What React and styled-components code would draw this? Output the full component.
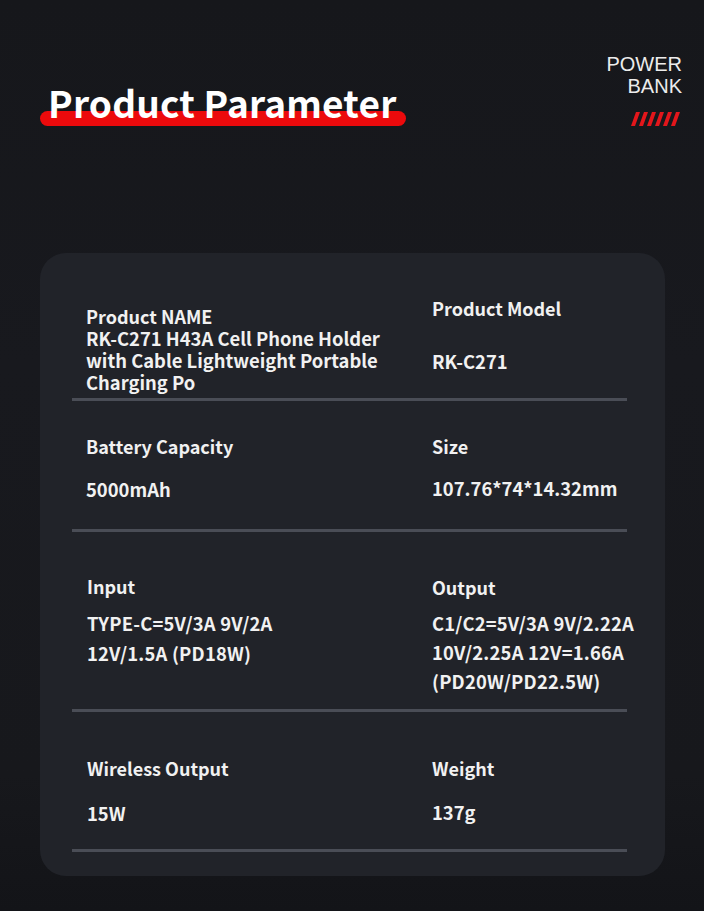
import React from "react";
import styled, { createGlobalStyle } from "styled-components";

const GlobalStyle = createGlobalStyle`
  html, body {
    margin: 0;
    padding: 0;
    background: #16171b;
  }
  * {
    box-sizing: border-box;
  }
`;

const Page = styled.div`
  width: 704px;
  height: 911px;
  overflow: hidden;
  background: linear-gradient(180deg, #16171b 0%, #18191e 40%, #17181c 85%, #131418 100%);
  font-family: "Noto Sans CJK SC", "Noto Sans", sans-serif;
  color: #f1f1f1;
`;

const Header = styled.header`
  height: 253px;
  display: flex;
  justify-content: space-between;
  align-items: flex-start;
`;

const TitleWrap = styled.div`
  position: relative;
  margin: 80px 0 0 40px;
  padding: 0 10px 0 8px;

  &::before {
    content: "";
    position: absolute;
    left: 0;
    right: 0;
    top: 31px;
    height: 15px;
    border-radius: 8px;
    background: #ec0a0c;
  }
`;

const Title = styled.h1`
  position: relative;
  margin: 0;
  font-size: 37px;
  line-height: 44px;
  font-weight: 700;
  color: #ffffff;
  letter-spacing: 0.2px;
`;

const Brand = styled.div`
  margin: 53px 22px 0 0;
  display: flex;
  flex-direction: column;
  align-items: flex-end;
`;

const BrandText = styled.div`
  font-family: "Liberation Sans", Arial, sans-serif;
  font-size: 20px;
  line-height: 22px;
  color: #ececec;
  text-align: right;
`;

const Stripes = styled.svg`
  display: block;
  margin-top: 15px;
  margin-right: 1px;
`;

const Card = styled.section`
  margin-left: 40px;
  width: 625px;
  height: 623px;
  border-radius: 26px;
  background: #212329;
  padding: 0 38px 0 32px;
`;

const Row = styled.div`
  display: grid;
  grid-template-columns: 360px 1fr;
  height: ${(p) => p.$h}px;
  border-bottom: 3px solid #4a4d56;
`;

const Field = styled.div`
  padding: ${(p) => p.$pad}px 0 0 ${(p) => (p.$right ? 0 : p.$indent || 14)}px;
  display: flex;
  flex-direction: column;
  gap: ${(p) => p.$gap}px;
`;

const Label = styled.div`
  font-size: 18px;
  line-height: 22px;
  font-weight: 700;
  white-space: nowrap;
`;

const Value = styled.div`
  font-size: 18.4px;
  line-height: ${(p) => p.$lh || 22}px;
  font-weight: 700;
  white-space: pre;
  letter-spacing: ${(p) => (p.$wide ? "0.2px" : "0")};
`;

function StripeIcon() {
  const bars = [0, 1, 2, 3, 4, 5];
  return (
    <Stripes width="50" height="14" viewBox="0 0 50 14">
      {bars.map((i) => (
        <polygon
          key={i}
          points={`${i * 8 + 5},0 ${i * 8 + 9},0 ${i * 8 + 4},14 ${i * 8},14`}
          fill="#e3161b"
        />
      ))}
    </Stripes>
  );
}

export default function App() {
  return (
    <>
      <GlobalStyle />
      <Page>
        <Header>
          <TitleWrap>
            <Title>Product Parameter</Title>
          </TitleWrap>
          <Brand>
            <BrandText>
              POWER
              <br />
              BANK
            </BrandText>
            <StripeIcon />
          </Brand>
        </Header>

        <Card>
          <Row $h={148}>
            <Field $pad={52} $gap={0}>
              <Label>Product NAME</Label>
              <Value>
                {"RK-C271 H43A Cell Phone Holder\nwith Cable Lightweight Portable\nCharging Po"}
              </Value>
            </Field>
            <Field $right $pad={44} $gap={31}>
              <Label>Product Model</Label>
              <Value>RK-C271</Value>
            </Field>
          </Row>

          <Row $h={131}>
            <Field $pad={34} $gap={21}>
              <Label>Battery Capacity</Label>
              <Value>5000mAh</Value>
            </Field>
            <Field $right $pad={34} $gap={20}>
              <Label>Size</Label>
              <Value>107.76*74*14.32mm</Value>
            </Field>
          </Row>

          <Row $h={180}>
            <Field $pad={43} $gap={11} $indent={15}>
              <Label>Input</Label>
              <Value $lh={30} $wide>
                {"TYPE-C=5V/3A 9V/2A\n12V/1.5A (PD18W)"}
              </Value>
            </Field>
            <Field $right $pad={44} $gap={11}>
              <Label>Output</Label>
              <Value $lh={29} $wide>
                {"C1/C2=5V/3A 9V/2.22A\n10V/2.25A 12V=1.66A\n(PD20W/PD22.5W)"}
              </Value>
            </Field>
          </Row>

          <Row $h={140}>
            <Field $pad={45} $gap={23} $indent={15}>
              <Label>Wireless Output</Label>
              <Value>15W</Value>
            </Field>
            <Field $right $pad={45} $gap={22}>
              <Label>Weight</Label>
              <Value>137g</Value>
            </Field>
          </Row>
        </Card>
      </Page>
    </>
  );
}
